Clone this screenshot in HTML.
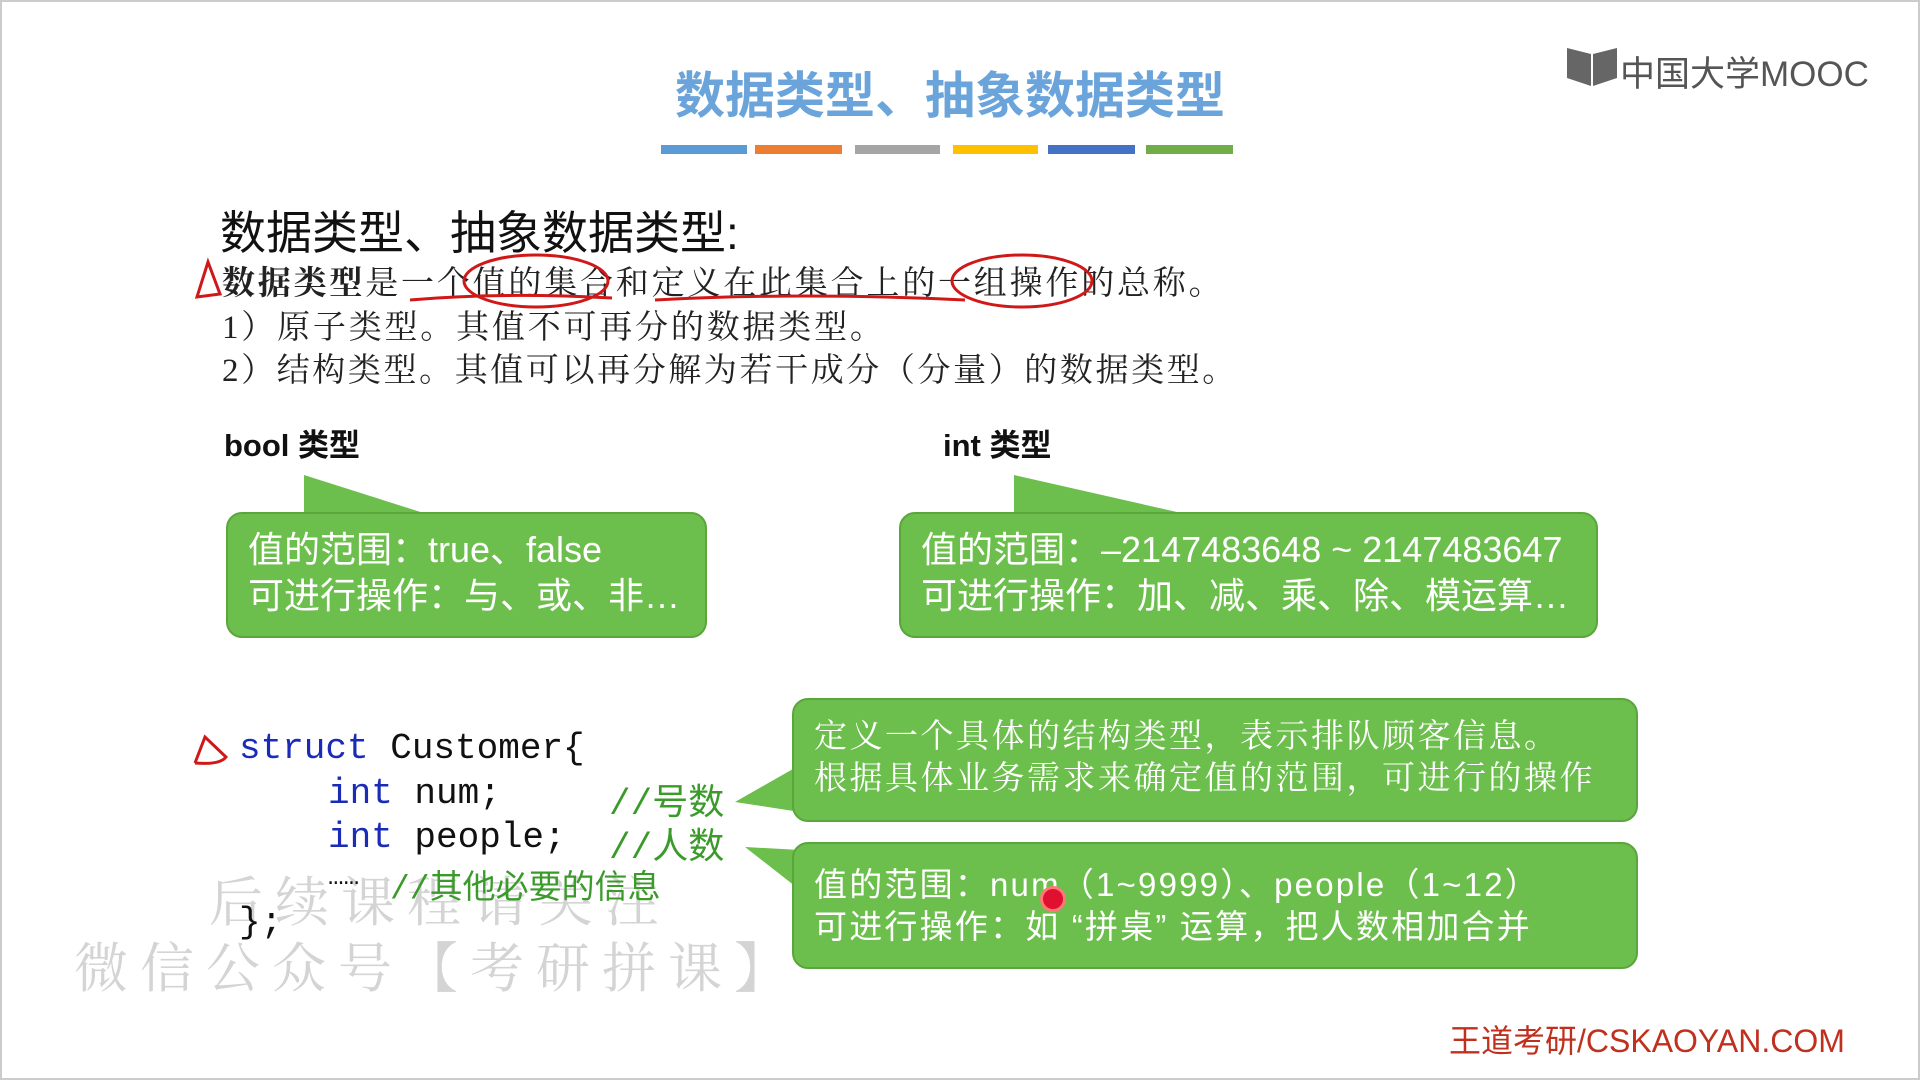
<!DOCTYPE html>
<html><head><meta charset="utf-8"><style>
body{margin:0;width:1920px;height:1080px;background:#fff;position:relative;overflow:hidden;font-family:"Liberation Sans","Noto Sans CJK SC",sans-serif;}
.a{position:absolute;white-space:nowrap;}
.bar{position:absolute;top:145px;height:9px;}
.box{position:absolute;background:#6cbf4c;border:2px solid #5aa63c;border-radius:16px;color:#fff;box-sizing:border-box;}
.serif{font-family:"Liberation Serif","Noto Serif CJK SC",serif;}
.mono{font-family:"Liberation Mono","Noto Sans CJK SC",monospace;font-size:36px;color:#111;}
.kw{color:#1a2bb8}.cm{color:#3a9a2a}
</style></head><body>
<div style="position:absolute;inset:0;border:2px solid #ccc;"></div>
<div class="a" style="left:0;width:1900px;text-align:center;top:56px;font-size:50px;color:#6aa4da;font-weight:bold;">数据类型、抽象数据类型</div>
<div class="bar" style="left:661px;width:86px;background:#5b9bd5"></div>
<div class="bar" style="left:755px;width:87px;background:#ed7d31"></div>
<div class="bar" style="left:855px;width:85px;background:#a5a5a5"></div>
<div class="bar" style="left:953px;width:85px;background:#ffc000"></div>
<div class="bar" style="left:1048px;width:87px;background:#4472c4"></div>
<div class="bar" style="left:1146px;width:87px;background:#70ad47"></div>
<svg class="a" style="left:1565px;top:44px" width="55" height="44"><path d="M2 4 L26 10 L26 42 L2 34Z M28 10 L52 4 L52 34 L28 42Z" fill="#666"/></svg>
<div class="a" style="left:1620px;top:46px;font-size:35px;color:#555;">中国大学MOOC</div>
<div class="a" style="left:220px;top:197px;font-size:46px;color:#111;">数据类型、抽象数据类型:</div>
<div class="a serif" style="left:222px;top:257px;font-size:33px;letter-spacing:2.8px;color:#222;"><b>数据类型</b>是一个值的集合和定义在此集合上的一组操作的总称。</div>
<div class="a serif" style="left:222px;top:301px;font-size:33px;letter-spacing:2.8px;color:#222;">1）原子类型。其值不可再分的数据类型。</div>
<div class="a serif" style="left:222px;top:344px;font-size:33px;letter-spacing:2.6px;color:#222;">2）结构类型。其值可以再分解为若干成分（分量）的数据类型。</div>
<svg class="a" style="left:0;top:0" width="1920" height="1080" fill="none" stroke="#d01818" stroke-width="3">
<path d="M197 297 L208 262 L220 294 Z"/>
<ellipse cx="536" cy="281" rx="72" ry="26"/>
<ellipse cx="1022" cy="281" rx="70" ry="26"/>
<path d="M410 300 Q500 292 612 298"/><path d="M655 300 Q800 292 965 300"/>
<path d="M195 763 L205 737 L226 757 Q220 765 195 763"/>
<path d="M1315 758 Q1420 745 1525 756"/>
</svg>
<div class="a" style="left:224px;top:420px;font-size:31px;font-weight:bold;color:#111;">bool 类型</div>
<div class="a" style="left:943px;top:420px;font-size:31px;font-weight:bold;color:#111;">int 类型</div>
<svg class="a" style="left:0;top:0" width="1920" height="1080">
<path d="M304 475 L304 515 L430 515 Z" fill="#6cbf4c"/>
<path d="M1014 475 L1014 515 L1190 515 Z" fill="#6cbf4c"/>
<path d="M735 802 L800 765 L800 812 Z" fill="#6cbf4c"/>
<path d="M745 847 L800 890 L800 850 Z" fill="#6cbf4c"/>
</svg>
<div class="box" style="left:226px;top:512px;width:481px;height:126px;font-size:36px;line-height:46px;padding:13px 0 0 20px;">值的范围：true、false<br>可进行操作：与、或、非…</div>
<div class="box" style="left:899px;top:512px;width:699px;height:126px;font-size:36px;line-height:46px;padding:13px 0 0 20px;">值的范围：–2147483648 ~ 2147483647<br>可进行操作：加、减、乘、除、模运算…</div>
<div class="box serif" style="left:792px;top:698px;width:846px;height:124px;font-size:33px;letter-spacing:2.5px;line-height:42px;padding:16px 0 0 20px;">定义一个具体的结构类型，表示排队顾客信息。<br>根据具体业务需求来确定值的范围，可进行的操作</div>
<div class="box" style="left:792px;top:842px;width:846px;height:127px;font-size:33px;letter-spacing:2.2px;line-height:42px;padding:20px 0 0 20px;">值的范围：num（1~9999）、people（1~12）<br>可进行操作：如 “拼桌” 运算，把人数相加合并</div>
<div class="a" style="left:1040px;top:886px;width:20px;height:20px;border-radius:50%;background:#e01030;border:3px solid #f77;"></div>
<div class="a" style="left:74px;top:870px;font-size:54px;color:#d4d4d4;letter-spacing:12px;font-family:'Liberation Serif','Noto Serif CJK SC',serif;line-height:66px;"><span style="margin-left:135px">后续课程请关注</span><br>微信公众号【考研拼课】</div>
<div class="a mono" style="left:239px;top:728px;"><span class="kw">struct</span> Customer{</div>
<div class="a mono" style="left:328px;top:773px;"><span class="kw">int</span> num;</div>
<div class="a mono cm" style="left:609px;top:773px;">//号数</div>
<div class="a mono" style="left:328px;top:817px;"><span class="kw">int</span> people;</div>
<div class="a mono cm" style="left:609px;top:817px;">//人数</div>
<div class="a mono" style="left:328px;top:862px;font-size:26px;">……</div>
<div class="a mono cm" style="left:390px;top:860px;font-size:33px;">//其他必要的信息</div>
<div class="a mono" style="left:239px;top:902px;">};</div>
<div class="a" style="left:1449px;top:1016px;font-size:32px;color:#c0301e;">王道考研/CSKAOYAN.COM</div>
</body></html>
